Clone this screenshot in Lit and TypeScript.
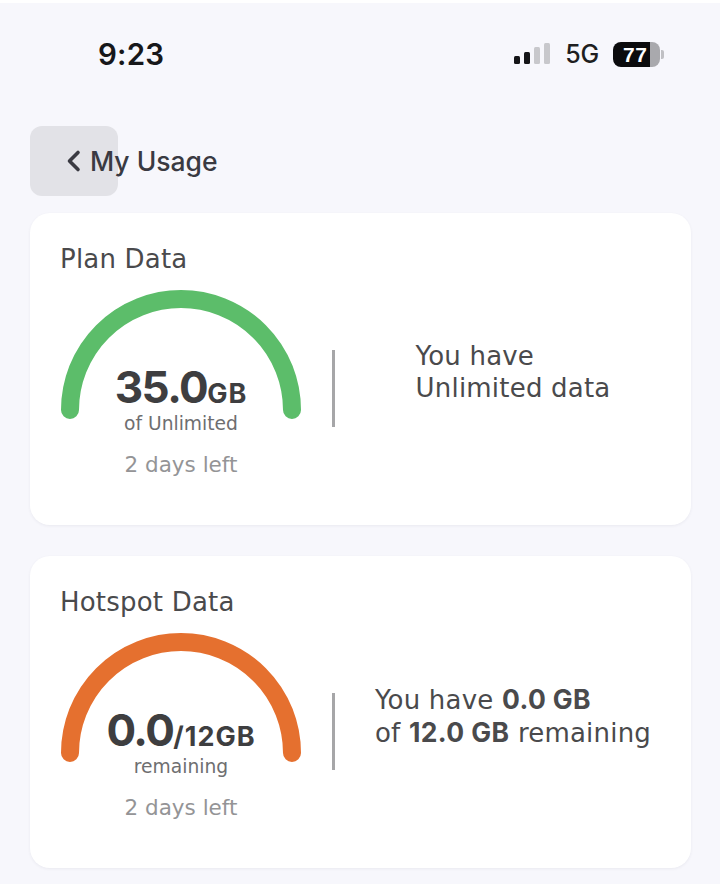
import { LitElement, html, css, svg } from "lit";
import { customElement } from "lit/decorators.js";

@customElement("usage-gauge")
class UsageGauge extends LitElement {
  static properties = { color: {} };
  color = "#000";
  static styles = css`
    :host { display: grid; width: 240px; height: 200px; }
    svg, .text { grid-area: 1 / 1; }
    svg { display: block; }
    .text { display: flex; flex-direction: column; align-items: center; padding-top: 72px; }
  `;
  render() {
    return html`<svg width="240" height="130" viewBox="0 0 240 130">
      ${svg`<path d="M9 120 A111 111 0 0 1 231 120" fill="none" stroke=${this.color} stroke-width="18" stroke-linecap="round"/>`}
    </svg><div class="text"><slot></slot></div>`;
  }
}

@customElement("data-card")
class DataCard extends LitElement {
  static properties = { heading: {}, color: {} };
  heading = "";
  color = "#000";
  static styles = css`
    :host {
      display: block; background: #fff; border-radius: 20px; height: 312px; box-sizing: border-box;
      padding: 29px 0 0 30px; box-shadow: 0 1px 3px rgba(60, 60, 90, 0.07);
    }
    h2 { margin: 0; font: 400 26px/34px "DejaVu Sans", sans-serif; color: #4a4a4c; letter-spacing: 0.2px; }
    .row { display: flex; margin-top: 14px; align-items: flex-start; }
    .left { margin-left: 1px; }
    .rule { width: 3px; height: 77px; background: #a6a6a8; margin: 60px 0 0 31px; flex: none; }
    .right { flex: 1; display: flex; justify-content: center; margin-top: 50px; font: 400 26px/32px "DejaVu Sans", sans-serif; color: #4a4a4c; white-space: nowrap; letter-spacing: 0.2px; }
  `;
  render() {
    return html`<h2>${this.heading}</h2>
      <div class="row">
        <usage-gauge class="left" .color=${this.color}><slot name="gauge"></slot></usage-gauge>
        <div class="rule"></div>
        <div class="right"><div><slot name="info"></slot></div></div>
      </div>`;
  }
}

@customElement("app-root")
class AppRoot extends LitElement {
  static styles = css`
    :host { display: block; width: 720px; height: 887px; background: #fff; font-family: Inter, sans-serif; overflow: hidden; }
    .page { background: #f7f7fc; height: 881px; margin-top: 3px; display: flex; flex-direction: column; }
    .status { display: flex; align-items: center; justify-content: space-between; height: 42px; margin-top: 30px; padding: 0 56px 0 98px; }
    .time { font: 600 29.5px/42px Inter, sans-serif; color: #17171a; letter-spacing: 0.2px; }
    .icons { display: flex; align-items: center; gap: 15px; }
    .bars { display: flex; align-items: flex-end; gap: 4px; height: 21px; margin: 0 -1px 1px 0; }
    .bars i { display: block; width: 6px; border-radius: 1.5px; }
    .b1 { height: 8px; background: #151518; }
    .b2 { height: 12px; background: #151518; }
    .b3 { height: 17px; background: #c8c8cc; }
    .b4 { height: 21px; background: #c8c8cc; }
    .net { font: 500 25px/28px Inter, sans-serif; color: #1e1e20; letter-spacing: -0.2px; margin: 0 -1px 0 1px; }
    .batt { display: flex; align-items: center; gap: 1px; }
    .cell { width: 47px; height: 25px; border-radius: 8px; background: linear-gradient(90deg, #0b0b0d 79%, #a9a9ad 79%); font: 700 21px/25px "Liberation Sans", sans-serif; color: #fff; box-sizing: border-box; padding-left: 10px; letter-spacing: 0.5px; }
    .nub { width: 3px; height: 9px; background: #c0c0c4; border-radius: 0 2px 2px 0; }
    .nav { display: grid; margin: 51px 0 0 30px; height: 70px; width: 300px; }
    .nav > * { grid-area: 1 / 1; }
    .tap { width: 88px; height: 70px; background: #e2e2e7; border-radius: 12px; }
    .back { display: flex; align-items: center; gap: 9px; padding-left: 36px; font: 500 26.5px/70px Inter, sans-serif; color: #3a3a42; }
    .back svg { flex: none; }
    .cards { display: flex; flex-direction: column; gap: 31px; padding: 0 29px 0 30px; margin-top: 17px; }
    .big { display: flex; align-items: baseline; font-weight: 700; color: #3e3e40; line-height: 50px; font-size: 44px; letter-spacing: -1.5px; }
    .unit { font-size: 27px; font-weight: 700; letter-spacing: 1px; }
    .sub { font: 400 18.7px/24px "DejaVu Sans", sans-serif; color: #6e6e70; margin-top: -7px; }
    .left { font: 400 21.5px/28px "DejaVu Sans", sans-serif; color: #949496; margin-top: 15px; }
    b { font: 700 26.5px/32px Inter, sans-serif; letter-spacing: 0.4px; }
  `;
  render() {
    return html`<div class="page">
      <div class="status">
        <div class="time">9:23</div>
        <div class="icons">
          <div class="bars"><i class="b1"></i><i class="b2"></i><i class="b3"></i><i class="b4"></i></div>
          <div class="net">5G</div>
          <div class="batt"><div class="cell">77</div><div class="nub"></div></div>
        </div>
      </div>
      <div class="nav">
        <div class="tap"></div>
        <div class="back">
          <svg width="15" height="24" viewBox="0 0 15 24"><path d="M12 3.5 L3.5 12 L12 20.5" fill="none" stroke="#3a3a42" stroke-width="3.6" stroke-linecap="round" stroke-linejoin="round"/></svg>
          <span>My Usage</span>
        </div>
      </div>
      <div class="cards">
        <data-card heading="Plan Data" color="#5cbd6a">
          <div slot="gauge" class="big">35.0<span class="unit">GB</span></div>
          <div slot="gauge" class="sub">of Unlimited</div>
          <div slot="gauge" class="left">2 days left</div>
          <div slot="info">You have</div>
          <div slot="info">Unlimited data</div>
        </data-card>
        <data-card heading="Hotspot Data" color="#e5702f">
          <div slot="gauge" class="big">0.0<span class="unit">/12GB</span></div>
          <div slot="gauge" class="sub">remaining</div>
          <div slot="gauge" class="left">2 days left</div>
          <div slot="info">You have <b>0.0 GB</b></div>
          <div slot="info">of <b>12.0 GB</b> remaining</div>
        </data-card>
      </div>
    </div>`;
  }
}
